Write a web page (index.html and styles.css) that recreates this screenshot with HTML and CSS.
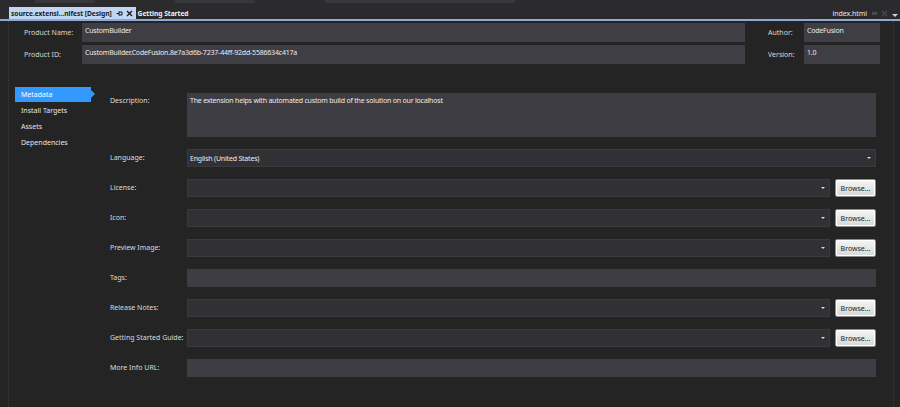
FILE: index.html
```html
<!DOCTYPE html>
<html>
<head>
<meta charset="utf-8">
<link rel="stylesheet" href="styles.css">
</head>
<body>
<div class="topbar">
  <div class="ghosts">
    <span class="ghost g1"></span><span class="ghost g2"></span><span class="ghost g3"></span>
  </div>
  <div class="tabs">
    <div class="tab active"><span class="tab-title">source.extensi...nifest [Design]</span><span class="tab-icons"><svg class="pin-icon" width="7" height="7" viewBox="0 0 7 7"><path d="M0.5 3.5H3M3 1.5V5.5M3 2H6V5H3" fill="none" stroke="#1b1b1b" stroke-width="1"/></svg><svg width="7" height="7" viewBox="0 0 7 7"><path d="M1 1L6 6M6 1L1 6" stroke="#1b1b1b" stroke-width="1.3"/></svg></span></div>
    <div class="tab plain">Getting Started</div>
    <div class="spacer"></div>
    <div class="tab right"><span class="tab-title">index.html</span><span class="tab-icons"><svg width="7" height="7" viewBox="0 0 7 7"><path d="M1 2H6V5H1Z" fill="#4a4a4c"/></svg><svg width="7" height="7" viewBox="0 0 7 7"><path d="M1 1L6 6M6 1L1 6" stroke="#4a4a4c" stroke-width="1.2"/></svg></span></div>
    <div class="tab-menu"></div>
  </div>
</div>
<div class="tabline"></div>
<div class="doc">
  <div class="header">
    <div class="hlabel">Product Name:</div>
    <div class="hinput">CustomBuilder</div>
    <div class="hlabel gapped">Author:</div>
    <div class="hinput">CodeFusion</div>
    <div class="hlabel">Product ID:</div>
    <div class="hinput">CustomBuilder.CodeFusion.8e7a3d6b-7237-44ff-92dd-5586634c417a</div>
    <div class="hlabel gapped">Version:</div>
    <div class="hinput">1.0</div>
  </div>
  <div class="body">
    <ul class="nav">
      <li class="nav-item selected">Metadata</li>
      <li class="nav-item">Install Targets</li>
      <li class="nav-item">Assets</li>
      <li class="nav-item">Dependencies</li>
    </ul>
    <div class="form">
      <div class="label top">Description:</div>
      <div class="textarea">The extension helps with automated custom build of the solution on our localhost</div>

      <div class="label">Language:</div>
      <div class="combo full">English (United States)<span class="arrow"></span></div>

      <div class="label">License:</div>
      <div class="field-row"><div class="combo"><span class="arrow"></span></div><button class="browse">Browse...</button></div>

      <div class="label">Icon:</div>
      <div class="field-row"><div class="combo"><span class="arrow"></span></div><button class="browse">Browse...</button></div>

      <div class="label">Preview Image:</div>
      <div class="field-row"><div class="combo"><span class="arrow"></span></div><button class="browse">Browse...</button></div>

      <div class="label">Tags:</div>
      <div class="textbox"></div>

      <div class="label">Release Notes:</div>
      <div class="field-row"><div class="combo"><span class="arrow"></span></div><button class="browse">Browse...</button></div>

      <div class="label">Getting Started Guide:</div>
      <div class="field-row"><div class="combo"><span class="arrow"></span></div><button class="browse">Browse...</button></div>

      <div class="label">More Info URL:</div>
      <div class="textbox"></div>
    </div>
  </div>
</div>
</body>
</html>
```

FILE: styles.css
```css
html, body {
  margin: 0;
  padding: 0;
  background: #242424;
  height: 100%;
  overflow: hidden;
}
body {
  font-family: "Noto Sans", "Open Sans", sans-serif;
  font-size: 7px;
  color: #e2e2e2;
}

.topbar {
  height: 19px;
  background: #2b2b2d;
}
.ghosts {
  display: flex;
  height: 4px;
  padding-left: 35px;
}
.ghost {
  display: block;
  height: 3px;
  background: #38383b;
}
.g1 { width: 60px; }
.g2 { width: 80px; margin-left: 80px; }
.g3 { width: 190px; margin-left: 70px; }

.tabs {
  display: flex;
  align-items: flex-end;
  height: 15px;
  padding-left: 9px;
}
.tab {
  display: flex;
  align-items: center;
  height: 12px;
  white-space: nowrap;
  font-size: 6.7px;
  letter-spacing: -0.05px;
}
.tab.active {
  background: #c0d6f2;
  color: #1b1b1b;
  font-weight: bold;
  padding: 0 3px 0 2px;
}
.tab.plain {
  color: #f0f0f0;
  font-weight: bold;
  padding-left: 2px;
}
.tab-icons {
  display: flex;
  align-items: center;
  gap: 3px;
  margin-left: 4px;
}
.tab-icons svg { display: block; }
.spacer { flex: 1; }
.tab.right {
  color: #e8e8e8;
  font-size: 7px;
  padding-right: 2px;
}
.tab-menu {
  width: 0;
  height: 0;
  margin: 0 2px 2px 2px;
  border-left: 3px solid transparent;
  border-right: 3px solid transparent;
  border-top: 3px solid #cfcfcf;
}

.tabline {
  height: 2px;
  background: #8ca9d8;
}

.doc {
  margin-left: 8px;
  width: 884px;
  height: 386px;
  border-left: 1px dotted #3c3c3c;
  border-right: 1px dotted #3c3c3c;
}

.header {
  display: grid;
  grid-template-columns: 58px 663px 59px 76px;
  row-gap: 3px;
  padding: 2px 0 0 15px;
}
.hlabel {
  height: 19px;
  line-height: 19px;
  color: #d8d8d8;
}
.hlabel.gapped { padding-left: 23px; }
.hinput {
  height: 19px;
  background: #3e3e44;
  padding: 3px 3px 0;
  box-sizing: border-box;
  color: #ececec;
  white-space: nowrap;
  overflow: hidden;
  letter-spacing: -0.2px;
}

.body {
  display: flex;
  padding: 23px 17px 0 6px;
}
.nav {
  list-style: none;
  margin: 0;
  padding: 0;
  width: 95px;
  flex: none;
}
.nav-item {
  height: 16px;
  line-height: 16px;
  padding-left: 6px;
  width: 70px;
  position: relative;
  color: #e6e6e6;
}
.nav-item.selected {
  background: #3399ff;
  color: #fff;
  height: 15px;
  line-height: 15px;
  margin-bottom: 1px;
}
.nav-item.selected::after {
  content: "";
  position: absolute;
  right: -4px;
  top: 3px;
  border-top: 4px solid transparent;
  border-bottom: 4px solid transparent;
  border-left: 4px solid #3399ff;
}

.form {
  flex: 1;
  display: grid;
  grid-template-columns: 77px 1fr;
  grid-template-rows: 44px;
  grid-auto-rows: 18px;
  row-gap: 12px;
  padding-top: 6px;
}
.label {
  line-height: 18px;
  color: #dcdcdc;
  white-space: nowrap;
}
.label.top {
  line-height: 16px;
}
.textarea {
  background: #3d3d43;
  padding: 3px 3px;
  box-sizing: border-box;
  color: #ececec;
  letter-spacing: -0.2px;
}
.textbox {
  background: #3d3d43;
  height: 18px;
}
.combo {
  position: relative;
  background: #313135;
  border: 1px solid #3a3a3e;
  box-sizing: border-box;
  height: 18px;
  line-height: 18px;
  padding-left: 2px;
  color: #ececec;
  letter-spacing: -0.2px;
}
.field-row {
  display: flex;
  gap: 5px;
  height: 18px;
}
.field-row .combo {
  flex: 1;
}
.arrow {
  position: absolute;
  right: 4px;
  top: 7px;
  border-left: 2px solid transparent;
  border-right: 2px solid transparent;
  border-top: 2px solid #dcdcdc;
}
.browse {
  width: 41px;
  height: 18px;
  padding: 0;
  margin: 0;
  font-family: "Noto Sans", "Open Sans", sans-serif;
  font-size: 7px;
  color: #1e1e1e;
  background: linear-gradient(#f6f6f6, #e6e6e6 50%, #d8d8d8);
  border: 1px solid #8a8a8a;
  border-radius: 2px;
  box-shadow: inset 0 0 0 1px #fff;
}
```
